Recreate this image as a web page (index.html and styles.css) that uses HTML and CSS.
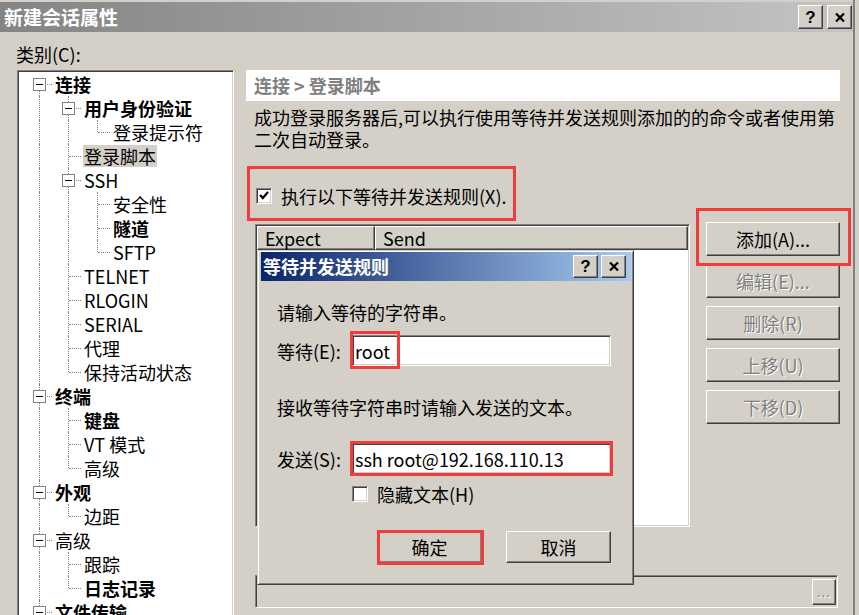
FILE: index.html
```html
<!DOCTYPE html>
<html lang="zh-CN">
<head>
  <meta charset="UTF-8" />
  <title>新建会话属性</title>
  <link rel="stylesheet" href="styles.css">
</head>
<body>

<div class="window">
  <div class="titlebar">
    <span class="title">新建会话属性</span>
    <div class="title-btns">
      <span class="tbtn">?</span>
      <span class="tbtn">
        <svg width="10" height="9" viewBox="0 0 10 9"><path d="M1 0.5 L9 8.5 M9 0.5 L1 8.5" stroke="#000" stroke-width="2.2" fill="none"/></svg>
      </span>
    </div>
  </div>

  <div class="content">
    <div class="cat-label">类别(C):</div>

    <div class="main">
      <!-- category tree -->
      <div class="tree">
        <div class="row"><span class="g f"><i class="box"></i></span><span class="lbl bold">连接</span></div>
        <div class="row"><span class="g v"></span><span class="g t"><i class="box"></i></span><span class="lbl bold">用户身份验证</span></div>
        <div class="row"><span class="g v"></span><span class="g v"></span><span class="g l"></span><span class="lbl">登录提示符</span></div>
        <div class="row"><span class="g v"></span><span class="g t"></span><span class="lbl sel">登录脚本</span></div>
        <div class="row"><span class="g v"></span><span class="g t"><i class="box"></i></span><span class="lbl">SSH</span></div>
        <div class="row"><span class="g v"></span><span class="g v"></span><span class="g t"></span><span class="lbl">安全性</span></div>
        <div class="row"><span class="g v"></span><span class="g v"></span><span class="g t"></span><span class="lbl bold">隧道</span></div>
        <div class="row"><span class="g v"></span><span class="g v"></span><span class="g l"></span><span class="lbl">SFTP</span></div>
        <div class="row"><span class="g v"></span><span class="g t"></span><span class="lbl">TELNET</span></div>
        <div class="row"><span class="g v"></span><span class="g t"></span><span class="lbl">RLOGIN</span></div>
        <div class="row"><span class="g v"></span><span class="g t"></span><span class="lbl">SERIAL</span></div>
        <div class="row"><span class="g v"></span><span class="g t"></span><span class="lbl">代理</span></div>
        <div class="row"><span class="g v"></span><span class="g l"></span><span class="lbl">保持活动状态</span></div>
        <div class="row"><span class="g t"><i class="box"></i></span><span class="lbl bold">终端</span></div>
        <div class="row"><span class="g v"></span><span class="g t"></span><span class="lbl bold">键盘</span></div>
        <div class="row"><span class="g v"></span><span class="g t"></span><span class="lbl">VT 模式</span></div>
        <div class="row"><span class="g v"></span><span class="g l"></span><span class="lbl">高级</span></div>
        <div class="row"><span class="g t"><i class="box"></i></span><span class="lbl bold">外观</span></div>
        <div class="row"><span class="g v"></span><span class="g l"></span><span class="lbl">边距</span></div>
        <div class="row"><span class="g t"><i class="box"></i></span><span class="lbl">高级</span></div>
        <div class="row"><span class="g v"></span><span class="g t"></span><span class="lbl">跟踪</span></div>
        <div class="row"><span class="g v"></span><span class="g l"></span><span class="lbl bold">日志记录</span></div>
        <div class="row"><span class="g t"><i class="box"></i></span><span class="lbl bold">文件传输</span></div>
      </div>

      <!-- right panel -->
      <div class="panel">
        <div class="panel-head">连接 &gt; 登录脚本</div>
        <p class="desc">成功登录服务器后,可以执行使用等待并发送规则添加的的命令或者使用第二次自动登录。</p>

        <div class="enable">
          <span class="mark mark-enable"></span>
          <span class="check">
            <svg width="10" height="9" viewBox="0 0 10 9"><path d="M1 4 L3.8 7 L9 1" stroke="#000" stroke-width="2.2" fill="none"/></svg>
          </span>
          <span>执行以下等待并发送规则(X).</span>
        </div>

        <div class="rules">
          <div class="list">
            <div class="list-head">
              <span class="col col-expect">Expect</span>
              <span class="col col-send">Send</span>
            </div>
          </div>
          <div class="side-btns">
            <button class="btn side add">添加(A)...<span class="mark mark-add"></span></button>
            <button class="btn side" disabled>编辑(E)...</button>
            <button class="btn side" disabled>删除(R)</button>
            <button class="btn side" disabled>上移(U)</button>
            <button class="btn side" disabled>下移(D)</button>
          </div>
        </div>

        <div class="path-field">
          <span class="btn dots">...</span>
        </div>
      </div>
    </div>
  </div>

  <!-- modal sub dialog -->
  <div class="dialog">
    <div class="dlg-title">
      <span class="dlg-name">等待并发送规则</span>
      <div class="dlg-btns">
        <span class="tbtn small">?</span>
        <span class="tbtn small">
          <svg width="10" height="9" viewBox="0 0 10 9"><path d="M1 0.5 L9 8.5 M9 0.5 L1 8.5" stroke="#000" stroke-width="2.2" fill="none"/></svg>
        </span>
      </div>
    </div>
    <div class="dlg-body">
      <div class="dlg-text">请输入等待的字符串。</div>
      <div class="field-row">
        <span class="field-label">等待(E):</span>
        <span class="field-wrap">
          <input class="field" type="text" value="root" />
          <span class="mark mark-root"></span>
        </span>
      </div>
      <div class="dlg-text gap">接收等待字符串时请输入发送的文本。</div>
      <div class="field-row send-row">
        <span class="field-label">发送(S):</span>
        <span class="field-wrap">
          <input class="field" type="text" value="ssh root@192.168.110.13" />
          <span class="mark mark-send"></span>
        </span>
      </div>
      <div class="hide-row">
        <span class="check"></span>
        <span>隐藏文本(H)</span>
      </div>
      <div class="dlg-actions">
        <button class="btn act">确定<span class="mark mark-ok"></span></button>
        <button class="btn act">取消</button>
      </div>
    </div>
  </div>
</div>

</body>
</html>
```

FILE: styles.css
```css
body {
  margin: 0;
  width: 859px;
  height: 615px;
  overflow: hidden;
  background: #d4d0c8;
  font-family: "Noto Sans CJK SC", sans-serif;
  font-size: 18px;
  color: #000;
}
.window {
  position: relative;
  width: 855px;
  height: 615px;
  padding-top: 2px;
  box-sizing: border-box;
  border-right: 2px solid #808080;
  background: #d4d0c8;
}

/* title bar */
.titlebar {
  height: 30px;
  display: flex;
  align-items: center;
  justify-content: space-between;
  padding: 0 1px 0 4px;
  background: linear-gradient(to right, #848484, #c4c4c4);
}
.title {
  color: #fff;
  font-weight: bold;
  font-size: 19px;
  line-height: 30px;
}
.title-btns, .dlg-btns {
  display: flex;
  gap: 4px;
}
.tbtn {
  width: 25px;
  height: 24px;
  box-sizing: border-box;
  display: flex;
  align-items: center;
  justify-content: center;
  background: #d4d0c8;
  border: 1px solid;
  border-color: #fff #404040 #404040 #fff;
  box-shadow: inset -1px -1px #808080;
  font-family: "Liberation Sans", sans-serif;
  font-weight: bold;
  font-size: 17px;
  line-height: 1;
}
.tbtn.small {
  height: 23px;
}

/* left part */
.content {
  padding-left: 17px;
}
.cat-label {
  margin-top: 10px;
  line-height: 24px;
  margin-left: -1px;
}
.main {
  display: flex;
  gap: 12px;
  margin-top: 4px;
}
.tree {
  width: 217px;
  height: 560px;
  box-sizing: border-box;
  background: #fff;
  border: 1px solid;
  border-color: #808080 #fff #fff #808080;
  box-shadow: inset 1px 1px #404040, inset -1px -1px #d4d0c8;
  padding: 1px 0 0 7px;
  overflow: hidden;
}
.row {
  display: flex;
  align-items: center;
  height: 24px;
  white-space: nowrap;
}
.g {
  position: relative;
  flex: none;
  width: 29px;
  height: 24px;
}
.g.v::before, .g.t::before, .g.l::before, .g.f::before {
  content: "";
  position: absolute;
  left: 14px;
  top: 0;
  bottom: 0;
  border-left: 1px dotted #808080;
}
.g.l::before {
  bottom: 12px;
}
.g.f::before {
  top: 12px;
}
.g.t::after, .g.l::after, .g.f::after {
  content: "";
  position: absolute;
  left: 15px;
  right: 2px;
  top: 12px;
  border-top: 1px dotted #808080;
}
.box {
  position: absolute;
  z-index: 1;
  left: 8px;
  top: 6px;
  width: 13px;
  height: 13px;
  box-sizing: border-box;
  border: 1px solid #808080;
  background: #fff;
}
.box::before {
  content: "";
  position: absolute;
  left: 2px;
  right: 2px;
  top: 5px;
  height: 1px;
  background: #000;
}
.lbl {
  padding: 0 1px;
  line-height: 22px;
}
.lbl.bold {
  font-weight: bold;
}
.lbl.sel {
  background: #d4d0c8;
}

/* right panel */
.panel {
  width: 594px;
  display: flex;
  flex-direction: column;
}
.panel-head {
  height: 31px;
  line-height: 31px;
  padding-left: 8px;
  background: #fff;
  color: #808080;
  font-weight: bold;
}
.desc {
  margin: 5px 0 0;
  padding-left: 8px;
  line-height: 22px;
}
.enable {
  position: relative;
  align-self: flex-start;
  display: flex;
  align-items: center;
  gap: 9px;
  height: 17px;
  margin: 37px 0 0 10px;
  line-height: 22px;
}
.check {
  width: 16px;
  height: 16px;
  box-sizing: border-box;
  display: flex;
  align-items: center;
  justify-content: center;
  background: #fff;
  border: 1px solid;
  border-color: #808080 #fff #fff #808080;
  box-shadow: inset 1px 1px #404040, inset -1px -1px #d4d0c8;
}
.mark {
  position: absolute;
  z-index: 2;
  box-sizing: border-box;
  border: 3px solid #f23b3b;
  pointer-events: none;
}
.mark-enable {
  left: -9px;
  top: -21px;
  width: 269px;
  height: 55px;
}

.rules {
  display: flex;
  align-items: flex-start;
  gap: 16px;
  margin-top: 20px;
  padding-left: 9px;
}
.list {
  width: 435px;
  height: 303px;
  box-sizing: border-box;
  background: #fff;
  border: 1px solid;
  border-color: #808080 #fff #fff #808080;
  box-shadow: inset 1px 1px #404040, inset -1px -1px #d4d0c8;
  padding: 1px;
}
.list-head {
  display: flex;
  height: 24px;
}
.col {
  box-sizing: border-box;
  height: 24px;
  line-height: 22px;
  padding-left: 7px;
  background: #d4d0c8;
  border: 1px solid;
  border-color: #fff #404040 #404040 #fff;
  box-shadow: inset -1px -1px #808080;
}
.col-expect {
  width: 118px;
}
.col-send {
  flex: 1;
}

.btn {
  position: relative;
  box-sizing: border-box;
  padding: 0;
  font-family: inherit;
  font-size: 18px;
  color: #000;
  background: #d4d0c8;
  border: 1px solid;
  border-color: #fff #404040 #404040 #fff;
  box-shadow: inset -1px -1px #808080;
}
.btn:disabled {
  color: #808080;
  text-shadow: 1px 1px 0 #fff;
}
.side-btns {
  display: flex;
  flex-direction: column;
  gap: 8px;
  margin-top: -2px;
}
.side {
  width: 134px;
  height: 34px;
}
.mark-add {
  left: -11px;
  top: -15px;
  width: 155px;
  height: 58px;
}
.path-field {
  width: 583px;
  height: 33px;
  box-sizing: border-box;
  margin: 48px 0 0 9px;
  display: flex;
  justify-content: flex-end;
  align-items: center;
  border: 1px solid;
  border-color: #808080 #fff #fff #808080;
  box-shadow: inset 1px 1px #404040, inset -1px -1px #d4d0c8;
  padding-right: 1px;
}
.dots {
  width: 24px;
  height: 26px;
  display: flex;
  align-items: center;
  justify-content: center;
  font-size: 13px;
  color: #808080;
  text-shadow: 1px 1px 0 #fff;
  letter-spacing: 1px;
}

/* sub dialog */
.dialog {
  position: absolute;
  left: 257px;
  top: 250px;
  width: 377px;
  height: 335px;
  box-sizing: border-box;
  padding: 1px 2px 2px 3px;
  background: #d4d0c8;
  border: 1px solid;
  border-color: #d4d0c8 #404040 #404040 #d4d0c8;
  box-shadow: inset 1px 1px #fff, inset -1px -1px #808080;
}
.dlg-title {
  height: 29px;
  display: flex;
  align-items: center;
  justify-content: space-between;
  padding: 0 5px 0 2px;
  background: linear-gradient(to right, #0a246a, #a6caf0);
}
.dlg-name {
  color: #fff;
  font-weight: bold;
  line-height: 29px;
}
.dlg-btns {
  gap: 3px;
}
.dlg-body {
  padding-left: 16px;
}
.dlg-text {
  margin-top: 20px;
  line-height: 22px;
}
.dlg-text.gap {
  margin-top: 30px;
}
.field-row {
  display: flex;
  align-items: center;
  margin-top: 12px;
}
.field-row.send-row {
  margin-top: 25px;
}
.field-label {
  width: 75px;
  line-height: 22px;
}
.field-wrap {
  position: relative;
  display: block;
}
.field {
  display: block;
  width: 259px;
  height: 31px;
  box-sizing: border-box;
  margin: 0;
  padding: 0 2px;
  font-family: inherit;
  font-size: 18px;
  color: #000;
  background: #fff;
  border: 1px solid;
  border-color: #808080 #fff #fff #808080;
  box-shadow: inset 1px 1px #404040, inset -1px -1px #d4d0c8;
  outline: none;
}
.mark-root {
  left: -2px;
  top: -4px;
  width: 50px;
  height: 38px;
}
.mark-send {
  left: -2px;
  top: -2px;
  width: 263px;
  height: 35px;
}
.hide-row {
  display: flex;
  align-items: center;
  gap: 9px;
  height: 17px;
  margin-top: 11px;
  padding-left: 75px;
  line-height: 22px;
}
.dlg-actions {
  width: 334px;
  display: flex;
  justify-content: flex-end;
  gap: 24px;
  margin-top: 29px;
}
.act {
  width: 105px;
  height: 32px;
}
.mark-ok {
  left: -1px;
  top: -2px;
  width: 107px;
  height: 35px;
}
```
